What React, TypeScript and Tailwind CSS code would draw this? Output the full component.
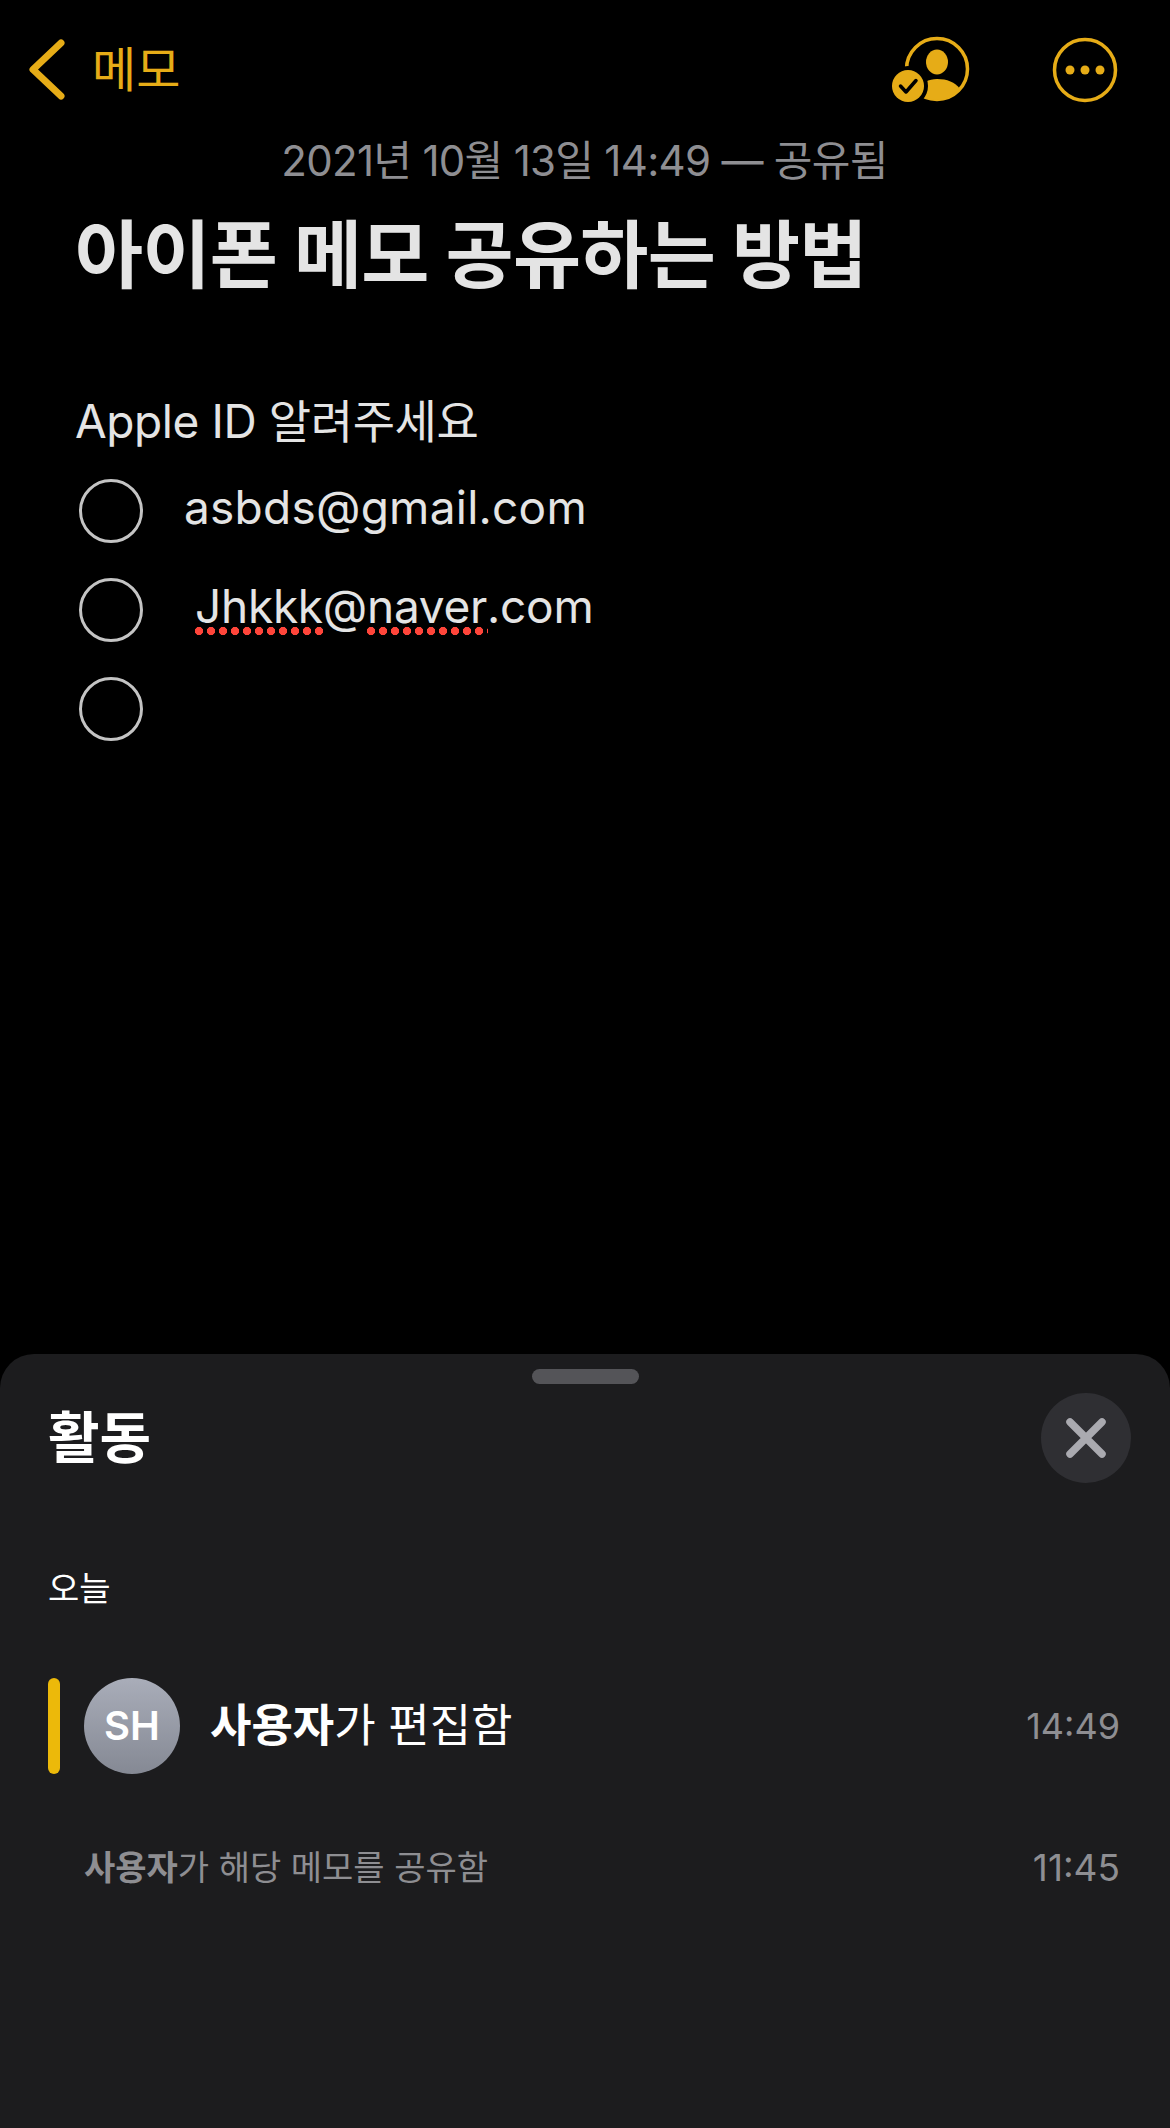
const FONT = "font-['Inter','Noto_Sans_CJK_KR',sans-serif]";

function BackChevron() {
  return (
    <svg width="40" height="64" viewBox="0 0 40 64" fill="none" className="block">
      <path d="M35 5 L7 31.5 L35 58" stroke="#e6ac17" strokeWidth="7" strokeLinecap="round" strokeLinejoin="round" />
    </svg>
  );
}

function CollabIcon() {
  return (
    <svg width="80" height="68" viewBox="0 0 80 68" fill="none" className="block">
      <circle cx="46" cy="33" r="30.5" stroke="#e6ac17" strokeWidth="3.5" />
      <ellipse cx="46" cy="26" rx="11" ry="12.5" fill="#e6ac17" />
      <path d="M26 56 C30 46 38 43 46 43 C56 43 64 46 69 53 C62 60 54 64 46 64 C38 64 32 61 26 56 Z" fill="#e6ac17" />
      <circle cx="17" cy="50" r="20" fill="#000" />
      <circle cx="17" cy="50" r="16" fill="#e6ac17" />
      <path d="M9.5 50 L15 56 L25 44.5" stroke="#000" strokeWidth="3.5" strokeLinecap="round" strokeLinejoin="round" />
    </svg>
  );
}

function MoreIcon() {
  return (
    <svg width="66" height="66" viewBox="0 0 66 66" fill="none" className="block">
      <circle cx="33" cy="33" r="30.5" stroke="#e6ac17" strokeWidth="3.5" />
      <circle cx="18" cy="33" r="4.5" fill="#e6ac17" />
      <circle cx="33" cy="33" r="4.5" fill="#e6ac17" />
      <circle cx="48" cy="33" r="4.5" fill="#e6ac17" />
    </svg>
  );
}

function CloseIcon() {
  return (
    <svg width="40" height="40" viewBox="0 0 40 40" fill="none" className="block">
      <path d="M4 4 L36 36 M36 4 L4 36" stroke="#aaaab0" strokeWidth="7.5" strokeLinecap="round" />
    </svg>
  );
}

function Misspelled({ children }: { children: React.ReactNode }) {
  return (
    <span className="relative inline-block">
      {children}
      <span className="absolute left-[-2px] right-[-1px] top-[51px] h-2 bg-[radial-gradient(circle,#ff453a_3.8px,transparent_4.4px)] bg-[length:12px_8px]" />
    </span>
  );
}

function CheckRow({ children }: { children?: React.ReactNode }) {
  return (
    <div className="flex h-[99px] items-center">
      <div className="h-[64px] w-[64px] shrink-0 rounded-full border-[3px] border-[#c4c4c4]" />
      {children}
    </div>
  );
}

export default function App() {
  return (
    <div className={`flex h-[2128px] w-[1170px] flex-col overflow-hidden bg-black ${FONT}`}>
      <header className="flex items-center pl-[26px] pr-[52px] pt-[36px]">
        <BackChevron />
        <span className="ml-[26px] text-[48px] leading-[60px] text-[#e6ac17]">메모</span>
        <div className="ml-auto flex items-center gap-[81px]">
          <CollabIcon />
          <MoreIcon />
        </div>
      </header>

      <main className="pl-[75px] pr-[76px]">
        <p className="mt-[32px] text-center text-[42px] leading-[50px] tracking-[-0.7px] text-[#8e8e92]">
          2021년 10월 13일 14:49 — 공유됨
        </p>
        <h1 className="mt-[24px] text-[74px] font-bold leading-[90px] tracking-[-0.7px] text-[#e4e4e4]">
          아이폰 메모 공유하는 방법
        </h1>
        <p className="mt-[91px] text-[46px] leading-[60px] tracking-[-0.4px] text-[#e4e4e4]">Apple ID 알려주세요</p>
        <div className="ml-[4px] mt-[10px] text-[46px] leading-[60px] text-[#e4e4e4]">
          <CheckRow>
            <span className="mb-[7px] ml-[41px] tracking-[0.25px]">asbds@gmail.com</span>
          </CheckRow>
          <CheckRow>
            <span className="mb-[7px] ml-[52px] tracking-[-0.27px]">
              <Misspelled>Jhkkk</Misspelled>@<Misspelled>naver</Misspelled>.com
            </span>
          </CheckRow>
          <CheckRow />
        </div>
      </main>

      <section className="mt-auto h-[774px] rounded-t-[34px] bg-[#1c1c1e]">
        <div className="mx-auto mt-[15px] h-[15px] w-[107px] rounded-full bg-[#545458]" />
        <div className="mt-[9px] flex items-center justify-between pl-[48px] pr-[39px]">
          <h2 className="text-[56px] font-bold leading-[90px] text-white">활동</h2>
          <button className="flex h-[90px] w-[90px] items-center justify-center rounded-full bg-[#2f2f33]">
            <CloseIcon />
          </button>
        </div>
        <div className="mt-[84px] pl-[48px] text-[34px] leading-[44px] text-white">오늘</div>

        <div className="mt-[67px] flex items-center pl-[48px] pr-[50px]">
          <div className="h-[96px] w-3 rounded-full bg-[#ecb90a]" />
          <div className="ml-[24px] flex h-[96px] w-[96px] items-center justify-center rounded-full bg-gradient-to-b from-[#a9adb9] to-[#858994] text-[40px] font-semibold text-white">
            SH
          </div>
          <div className="ml-[30px] text-[45px] leading-[60px] text-white">
            <span className="font-bold">사용자</span>가 편집함
          </div>
          <div className="ml-auto text-[36px] leading-[50px] text-[#8e8e92]">14:49</div>
        </div>

        <div className="mt-[72px] flex items-center pl-[84px] pr-[50px]">
          <div className="text-[34px] leading-[44px] text-[#8e8e92]">
            <span className="font-bold">사용자</span>가 해당 메모를 공유함
          </div>
          <div className="ml-auto text-[37px] leading-[44px] text-[#8e8e92]">11:45</div>
        </div>
      </section>
    </div>
  );
}
